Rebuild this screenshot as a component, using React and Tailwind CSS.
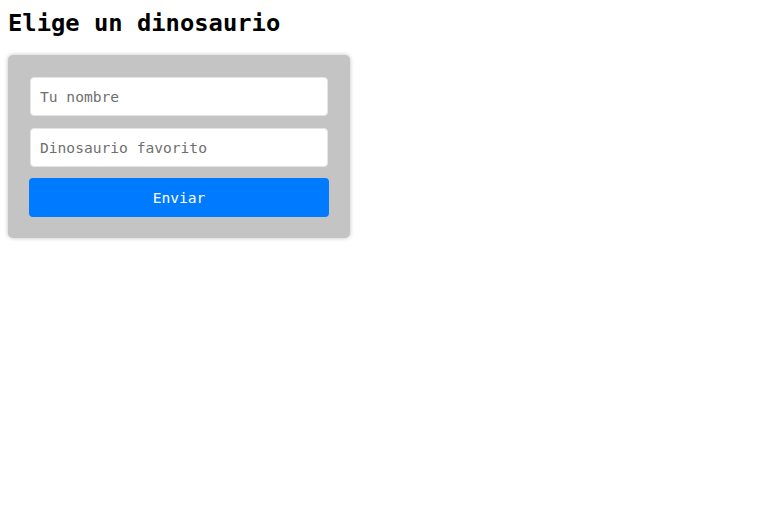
import React, { useState } from 'react';

export default function App() {
  const [nombre, setNombre] = useState('');
  const [dino, setDino] = useState('');

  return (
    <div className="min-h-screen bg-white px-2 pt-[9px] font-['DejaVu_Sans_Mono','Liberation_Mono',monospace]">
      <h1 className="text-[23.8px] leading-[28px] font-bold text-black mb-[18px]">Elige un dinosaurio</h1>

      <form
        onSubmit={(e) => e.preventDefault()}
        className="w-[342px] bg-[#c4c4c4] rounded-[5px] shadow-[0_0_4px_rgba(0,0,0,0.25)] px-[21px] pt-[22px] pb-[21px] flex flex-col"
      >
        <input
          type="text"
          placeholder="Tu nombre"
          value={nombre}
          onChange={(e) => setNombre(e.target.value)}
          className="mx-px h-[39px] bg-white rounded-[4px] border border-[#e4e4e4] px-[9px] text-[14.6px] text-black placeholder-[#6f6f6f] outline-none"
        />
        <input
          type="text"
          placeholder="Dinosaurio favorito"
          value={dino}
          onChange={(e) => setDino(e.target.value)}
          className="mx-px mt-[12px] h-[39px] bg-white rounded-[4px] border border-[#e4e4e4] px-[9px] text-[14.6px] text-black placeholder-[#6f6f6f] outline-none"
        />
        <button
          type="submit"
          className="mt-[11px] h-[39px] bg-[#007bff] rounded-[4px] text-white text-[14.6px] cursor-pointer"
        >
          Enviar
        </button>
      </form>
    </div>
  );
}
